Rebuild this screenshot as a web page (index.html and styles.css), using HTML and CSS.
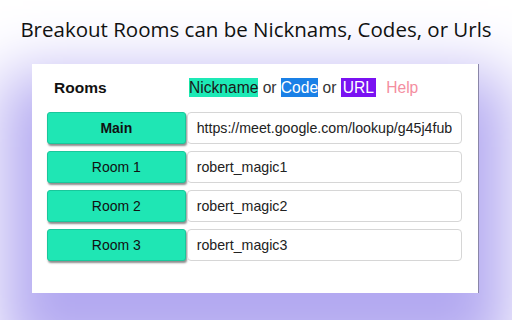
FILE: index.html
```html
<!DOCTYPE html>
<html lang="en">
<head>
  <meta charset="UTF-8">
  <title>Breakout Rooms</title>
  <link rel="stylesheet" href="styles.css">
</head>
<body>

  <h1 class="title">Breakout Rooms can be Nicknams, Codes, or Urls</h1>

  <!-- Rooms panel -->
  <div class="panel">
    <div class="panel-head">
      <span class="rooms-label">Rooms</span>
      <span class="legend">
        <span class="tag tag-nick">Nickname</span> or <span class="tag tag-code">Code</span> or <span class="tag tag-url">URL</span>
        <span class="help">Help</span>
      </span>
    </div>

    <div class="room-row">
      <button class="room-btn main">Main</button>
      <input class="room-input" type="text" value="https://meet.google.com/lookup/g45j4fub">
    </div>
    <div class="room-row">
      <button class="room-btn">Room 1</button>
      <input class="room-input" type="text" value="robert_magic1">
    </div>
    <div class="room-row">
      <button class="room-btn">Room 2</button>
      <input class="room-input" type="text" value="robert_magic2">
    </div>
    <div class="room-row">
      <button class="room-btn">Room 3</button>
      <input class="room-input" type="text" value="robert_magic3">
    </div>
  </div>

</body>
</html>
```

FILE: styles.css
```css
* {
  margin: 0;
  padding: 0;
  box-sizing: border-box;
}

body {
  width: 512px;
  height: 320px;
  overflow: hidden;
  background: #fff;
  font-family: "Liberation Sans", Arial, sans-serif;
  color: #111;
}

.title {
  font-family: "Open Sans", sans-serif;
  font-weight: 400;
  font-size: 20.5px;
  text-align: center;
  padding-top: 15px;
  height: 64px;
  color: #111;
}

/* Panel with purple glow */
.panel {
  width: 447px;
  height: 229px;
  margin-left: 32px;
  background: #fff;
  border-right: 1px solid #8a86a8;
  box-shadow: 0 40px 60px 30px #b3a9f1;
  padding: 12px 16px 0 15px;
}

.panel-head {
  display: flex;
  align-items: center;
  height: 24px;
  margin-bottom: 12px;
}

.rooms-label {
  font-size: 15.5px;
  font-weight: 600;
  width: 142px;
  padding-left: 7px;
}

.legend {
  font-size: 15.6px;
  color: #333;
  font-weight: 300;
}

.tag {
  padding: 1px 0;
}

.tag-nick {
  background: #1de9b6;
  color: #1a1a1a;
}

.tag-code {
  background: #1a80e6;
  color: #fff;
}

.tag-url {
  background: #7a12f2;
  color: #fff;
  padding: 1px 2px;
}

.help {
  color: #f48ea0;
  margin-left: 6px;
}

.room-row {
  display: flex;
  margin-bottom: 7px;
}

.room-btn {
  width: 139px;
  height: 32px;
  background: #1fe6b4;
  border: 1px solid #19c79b;
  border-radius: 3px;
  box-shadow: 1px 2px 2px rgba(0, 0, 0, 0.45);
  font-family: "Liberation Sans", Arial, sans-serif;
  font-size: 14px;
  color: #111;
}

.room-btn.main {
  font-weight: bold;
}

.room-input {
  width: 276px;
  height: 32px;
  margin-left: 1px;
  border: 1px solid #d6d6d6;
  border-radius: 4px;
  padding: 0 9px;
  font-family: "Liberation Sans", Arial, sans-serif;
  font-size: 14.2px;
  color: #222;
  outline: none;
}
```
